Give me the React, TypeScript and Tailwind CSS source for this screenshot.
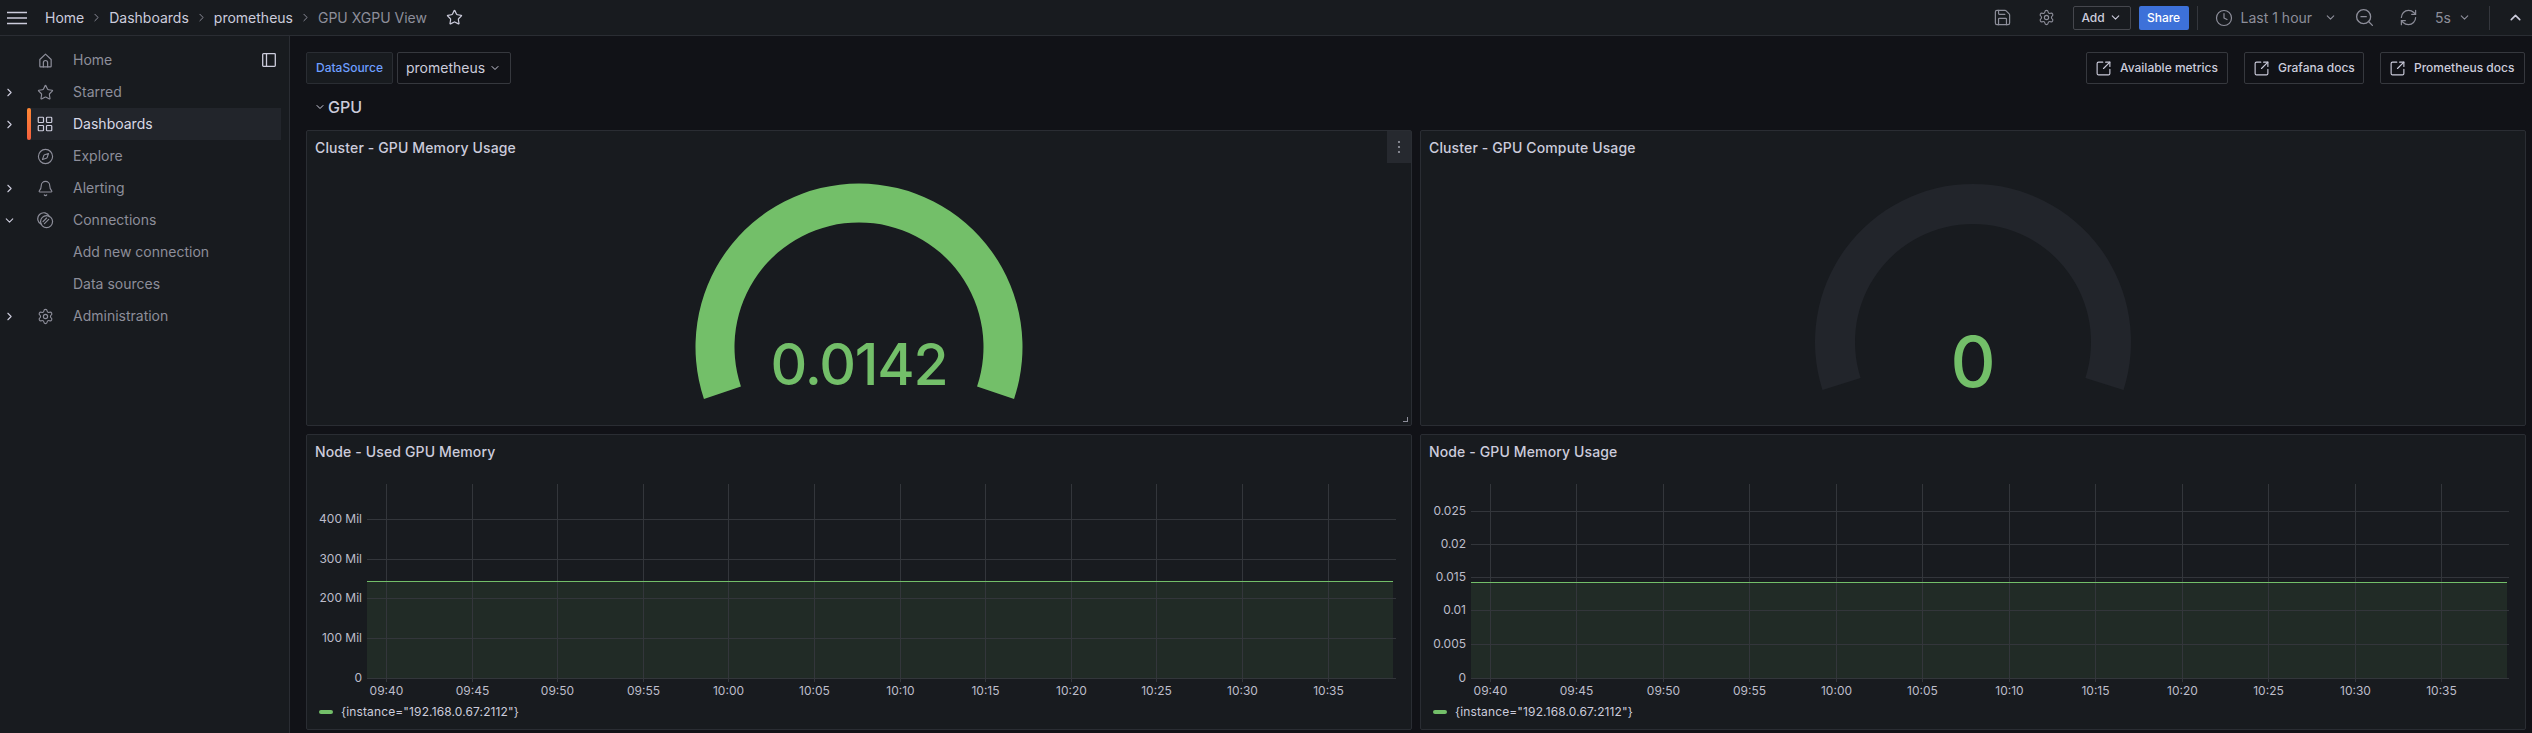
import {
  Bell,
  ChevronDown,
  ChevronRight,
  ChevronUp,
  Clock,
  Compass,
  LayoutGrid,
  RefreshCw,
  Save,
  Settings,
  SquareArrowOutUpRight,
  Star,
  ZoomOut,
} from "lucide-react";
import type { ReactNode } from "react";

const GREEN = "#73bf69";

function HomeIcon() {
  return (
    <svg width="17" height="17" viewBox="0 0 24 24" fill="none" stroke="currentColor" strokeWidth="1.7" strokeLinejoin="round" strokeLinecap="round">
      <path d="M4 10.5 12 3l8 7.5V20a1 1 0 0 1-1 1H5a1 1 0 0 1-1-1z" />
      <path d="M9 21v-6a3 3 0 0 1 6 0v6" />
    </svg>
  );
}

function ConnectionsIcon() {
  return (
    <svg width="17" height="17" viewBox="0 0 24 24" fill="none" stroke="currentColor" strokeWidth="1.7" strokeLinecap="round">
      <path d="M6.5 17.5A8.5 8.5 0 1 1 17.5 6.5" />
      <circle cx="13.5" cy="13.5" r="8.5" />
      <path d="M8.5 13.5 13.5 8.5M10.5 16.5l6-6" />
    </svg>
  );
}

function DockIcon() {
  return (
    <svg width="14" height="14" viewBox="0 0 14 14" fill="none" stroke="currentColor" strokeWidth="1.3">
      <rect x="0.7" y="0.7" width="12.6" height="12.6" rx="0.8" />
      <path d="M4.5 0.7v12.6" />
    </svg>
  );
}

function MenuIcon() {
  return (
    <svg width="20" height="14" viewBox="0 0 20 14" fill="none" stroke="currentColor" strokeWidth="1.4">
      <path d="M0 1.5h20M0 7h20M0 12.5h20" />
    </svg>
  );
}

const NAV: { label: string; icon?: ReactNode; chevron?: "right" | "down"; active?: boolean; dock?: boolean }[] = [
  { label: "Home", icon: <HomeIcon />, dock: true },
  { label: "Starred", icon: <Star size={17} strokeWidth={1.6} />, chevron: "right" },
  { label: "Dashboards", icon: <LayoutGrid size={18} strokeWidth={1.6} />, chevron: "right", active: true },
  { label: "Explore", icon: <Compass size={17} strokeWidth={1.6} /> },
  { label: "Alerting", icon: <Bell size={17} strokeWidth={1.6} />, chevron: "right" },
  { label: "Connections", icon: <ConnectionsIcon />, chevron: "down" },
  { label: "Add new connection" },
  { label: "Data sources" },
  { label: "Administration", icon: <Settings size={17} strokeWidth={1.6} />, chevron: "right" },
];

function Sidebar() {
  return (
    <aside className="w-[290px] shrink-0 border-r border-[#2a2d33] bg-[#181b1f] pt-2">
      {NAV.map((item) => (
        <div key={item.label} className="flex h-8 items-center">
          <div className="flex w-[27px] shrink-0 justify-center pr-[9px] pl-0 text-[#ccccdc]">
            {item.chevron === "right" && <ChevronRight size={13} strokeWidth={2} />}
            {item.chevron === "down" && <ChevronDown size={13} strokeWidth={2} />}
          </div>
          <div
            className={
              "mr-2 flex h-8 flex-1 items-center " +
              (item.active ? "bg-[#22252b] text-[#d8d9e6]" : "text-[#8d8e9a]")
            }
          >
            <div
              className={
                "h-8 w-1 shrink-0 rounded-[2px] " +
                (item.active ? "bg-gradient-to-b from-[#ff8833] to-[#f55f3e]" : "")
              }
            />
            <div className={"ml-[5px] flex w-[18px] shrink-0 justify-center " + (item.active ? "text-[#ccccdc]" : "text-[#8d8e9a]")}>
              {item.icon}
            </div>
            <span className="ml-[19px] text-sm">{item.label}</span>
            {item.dock && (
              <span className="mr-[5px] ml-auto text-[#ccccdc]">
                <DockIcon />
              </span>
            )}
          </div>
        </div>
      ))}
    </aside>
  );
}

function Crumb({ children, last }: { children: ReactNode; last?: boolean }) {
  return (
    <>
      <span className={"text-sm " + (last ? "text-[#8d8e9a]" : "text-[#ccccdc]")}>{children}</span>
      {!last && <ChevronRight size={13} className="mx-[6px] text-[#8d8e9a]" strokeWidth={1.8} />}
    </>
  );
}

function TopBar() {
  return (
    <header className="flex h-9 shrink-0 items-center border-b border-[#2a2d33] bg-[#181b1f] pr-2 pl-[7px] text-[#ccccdc]">
      <MenuIcon />
      <div className="ml-[18px] flex items-center">
        <Crumb>Home</Crumb>
        <Crumb>Dashboards</Crumb>
        <Crumb>prometheus</Crumb>
        <Crumb last>GPU XGPU View</Crumb>
      </div>
      <Star size={17} strokeWidth={1.7} className="ml-[19px]" />

      <div className="ml-auto flex items-center text-[#8d8e9a]">
        <Save size={19} strokeWidth={1.5} />
        <Settings size={17} strokeWidth={1.6} className="ml-[26px]" />
        <button className="ml-[18px] flex h-6 w-[58px] items-center justify-center gap-1 rounded-[2px] border border-[#45474d] text-xs font-medium text-[#ccccdc]">
          Add
          <ChevronDown size={13} strokeWidth={2} />
        </button>
        <button className="ml-2 h-6 w-[50px] rounded-[2px] bg-[#3d71d9] text-xs font-medium text-white">Share</button>
        <div className="ml-2 h-6 w-px bg-[#34373d]" />
        <Clock size={18} strokeWidth={1.6} className="ml-[17px]" />
        <span className="ml-2 text-sm">Last 1 hour</span>
        <ChevronDown size={13} strokeWidth={2} className="ml-[12px]" />
        <ZoomOut size={21} strokeWidth={1.5} className="ml-[17px]" />
        <RefreshCw size={19} strokeWidth={1.5} className="ml-6" />
        <span className="ml-[17px] text-sm">5s</span>
        <ChevronDown size={13} strokeWidth={2} className="ml-[7px]" />
        <div className="ml-[18px] h-6 w-px bg-[#34373d]" />
        <ChevronUp size={17} strokeWidth={2.2} className="ml-[17px] text-[#ccccdc]" />
      </div>
    </header>
  );
}

function DocLink({ label, width }: { label: string; width: string }) {
  return (
    <button className={"flex h-8 items-center gap-2 rounded-[2px] border border-[#36383e] pl-2 text-xs font-medium text-[#ccccdc] " + width}>
      <SquareArrowOutUpRight size={17} strokeWidth={1.6} />
      {label}
    </button>
  );
}

// annular sector, ends dropped `tail` degrees under the horizontal
function arcPath(cx: number, cy: number, r: number, inner: number, tail: number) {
  const a = (tail * Math.PI) / 180;
  const dx = Math.cos(a);
  const dy = Math.sin(a);
  return [
    `M${cx - r * dx} ${cy + r * dy}`,
    `A${r} ${r} 0 1 1 ${cx + r * dx} ${cy + r * dy}`,
    `L${cx + inner * dx} ${cy + inner * dy}`,
    `A${inner} ${inner} 0 1 0 ${cx - inner * dx} ${cy + inner * dy}`,
    "Z",
  ].join(" ");
}

function Gauge({ d, color, value, size, baseline, spacing }: { d: string; color: string; value: string; size: number; baseline: number; spacing?: number }) {
  return (
    <div className="flex flex-1 justify-center">
      <svg width="400" height="259" viewBox="0 0 400 259">
        <path d={d} fill={color} />
        <text x="200" y={baseline} textAnchor="middle" fontSize={size} fontWeight="500" letterSpacing={spacing} fill={GREEN}>
          {value}
        </text>
      </svg>
    </div>
  );
}

function Panel({ title, children }: { title: string; children: ReactNode }) {
  return (
    <section className="relative flex h-[296px] flex-col rounded-[2px] border border-[#2a2d33] bg-[#181b1f]">
      <h2 className="flex h-[34px] shrink-0 items-center pl-2 text-sm font-medium tracking-[0.13px] text-[#ccccdc]">{title}</h2>
      {children}
    </section>
  );
}

const TIMES = ["09:40", "09:45", "09:50", "09:55", "10:00", "10:05", "10:10", "10:15", "10:20", "10:25", "10:30", "10:35"];

type ChartProps = {
  left: number;
  gridRight: number;
  seriesRight: number;
  seriesY: number;
  firstTick: number;
  tickStep: number;
  yTicks: { y: number; label: string }[];
};

function Chart({ left, gridRight, seriesRight, seriesY, firstTick, tickStep, yTicks }: ChartProps) {
  const top = 15;
  const bottom = 209;
  const grid = "#33363b";
  return (
    <>
      <svg width="1104" height="233" viewBox="0 0 1104 233" className="shrink-0">
        <rect x={left} y={seriesY} width={seriesRight - left} height={bottom - seriesY} fill={GREEN} fillOpacity="0.1" />
        {yTicks.map((t) => (
          <g key={t.label}>
            <line x1={left} x2={gridRight} y1={t.y + 0.5} y2={t.y + 0.5} stroke={grid} />
            <text x={left - 5} y={t.y + 3.5} textAnchor="end" fontSize="12" fill="#bdbdca">
              {t.label}
            </text>
          </g>
        ))}
        {TIMES.map((time, i) => {
          const x = Math.round(firstTick + tickStep * i) + 0.5;
          return (
            <g key={time}>
              <line x1={x} x2={x} y1={top} y2={bottom + 4} stroke={grid} />
              <text x={x} y={226} textAnchor="middle" fontSize="12" fill="#bdbdca">
                {time}
              </text>
            </g>
          );
        })}
        <line x1={left} x2={seriesRight} y1={seriesY + 0.5} y2={seriesY + 0.5} stroke={GREEN} />
      </svg>
      <div className="flex h-[22px] items-center pb-[2px] pl-3 text-xs tracking-[0.13px] text-[#ccccdc]">
        <span className="h-1 w-[14px] rounded-sm bg-[#73bf69]" />
        <span className="ml-2">{'{instance="192.168.0.67:2112"}'}</span>
      </div>
    </>
  );
}

const MEMORY_TICKS = [
  { y: 50, label: "400 Mil" },
  { y: 90, label: "300 Mil" },
  { y: 129, label: "200 Mil" },
  { y: 169, label: "100 Mil" },
  { y: 209, label: "0" },
];

const USAGE_TICKS = [
  { y: 42, label: "0.025" },
  { y: 75, label: "0.02" },
  { y: 108, label: "0.015" },
  { y: 141, label: "0.01" },
  { y: 175, label: "0.005" },
  { y: 209, label: "0" },
];

export default function App() {
  return (
    <div className="flex h-[733px] w-[2532px] flex-col overflow-hidden bg-[#111217] [font-family:Inter,sans-serif]">
      <TopBar />
      <div className="flex min-h-0 flex-1">
        <Sidebar />
        <main className="flex-1 pt-4 pr-[6px] pl-4">
          <div className="flex items-center">
            <span className="flex h-8 w-[87px] items-center justify-center rounded-[2px] border border-[#2a2d33] bg-[#181b1f] text-xs font-medium text-[#6e9fff]">
              DataSource
            </span>
            <button className="ml-1 flex h-8 w-[114px] items-center rounded-[2px] border border-[#36383e] bg-[#111217] pl-2 text-sm text-[#ccccdc]">
              prometheus
              <ChevronDown size={12} strokeWidth={2} className="ml-[4px]" />
            </button>
            <div className="mr-px ml-auto flex gap-4">
              <DocLink label="Available metrics" width="w-[142px]" />
              <DocLink label="Grafana docs" width="w-[120px]" />
              <DocLink label="Prometheus docs" width="w-[145px]" />
            </div>
          </div>

          <div className="mt-[6px] mb-2 flex h-8 items-center pt-px pl-2 text-[#ccccdc]">
            <ChevronDown size={12} strokeWidth={2} />
            <span className="ml-[2px] text-base font-medium">GPU</span>
          </div>

          <div className="grid grid-cols-2 gap-2">
            <Panel title="Cluster - GPU Memory Usage">
              <button className="absolute top-0 right-0 flex h-8 w-6 items-center justify-center bg-[#26292f] text-[#ccccdc]">
                <svg width="4" height="14" viewBox="0 0 4 14" fill="#9a9ba6">
                  <circle cx="2" cy="2" r="1.1" />
                  <circle cx="2" cy="7" r="1.1" />
                  <circle cx="2" cy="12" r="1.1" />
                </svg>
              </button>
              <Gauge d={arcPath(200, 182, 163.5, 124.5, 18.5)} color={GREEN} value="0.0142" size={57} spacing={-1.2} baseline={220} />
              <span className="absolute right-[3px] bottom-[3px] h-[5px] w-[5px] border-r border-b border-[#8d8e9a]" />
            </Panel>
            <Panel title="Cluster - GPU Compute Usage">
              <Gauge d={arcPath(200, 177, 158, 118, 17.7)} color="#22252b" value="0" size={70} baseline={222} />
            </Panel>
            <Panel title="Node - Used GPU Memory">
              <Chart left={60} gridRight={1089} seriesRight={1086} seriesY={112} firstTick={79} tickStep={85.6} yTicks={MEMORY_TICKS} />
            </Panel>
            <Panel title="Node - GPU Memory Usage">
              <Chart left={50} gridRight={1088} seriesRight={1086} seriesY={113} firstTick={69} tickStep={86.45} yTicks={USAGE_TICKS} />
            </Panel>
          </div>
        </main>
      </div>
    </div>
  );
}
